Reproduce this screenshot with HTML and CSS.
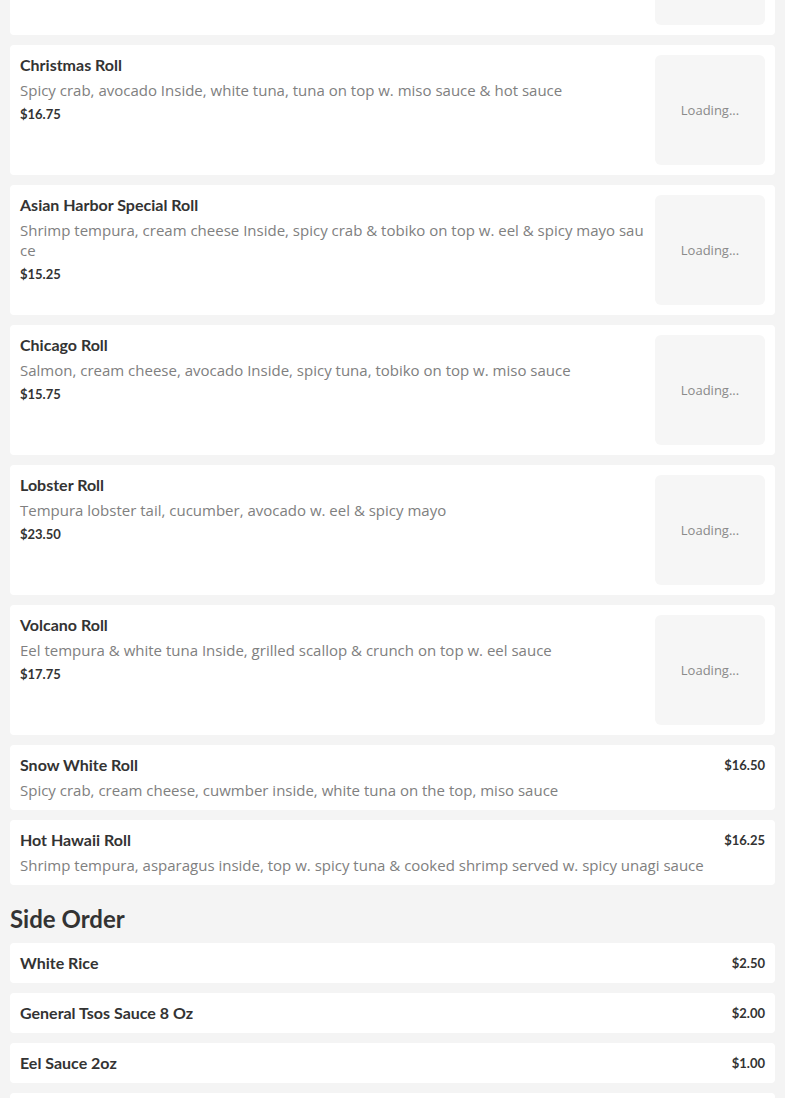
FILE: index.html
```html
<!DOCTYPE html>
<html lang="en">
<head>
<meta charset="utf-8">
<title>Menu</title>
<link rel="stylesheet" href="styles.css">
</head>
<body>
<main class="menu">
  <section class="list">
    <article class="card partial">
      <div class="info"></div>
      <div class="thumb thumb-cut"></div>
    </article>
    <article class="card">
      <div class="info">
        <h3 class="name">Christmas Roll</h3>
        <p class="desc">Spicy crab, avocado Inside, white tuna, tuna on top w. miso sauce &amp; hot sauce</p>
        <p class="price">$16.75</p>
      </div>
      <div class="thumb">Loading...</div>
    </article>
    <article class="card">
      <div class="info">
        <h3 class="name">Asian Harbor Special Roll</h3>
        <p class="desc">Shrimp tempura, cream cheese Inside, spicy crab &amp; tobiko on top w. eel &amp; spicy mayo sauce</p>
        <p class="price">$15.25</p>
      </div>
      <div class="thumb">Loading...</div>
    </article>
    <article class="card">
      <div class="info">
        <h3 class="name">Chicago Roll</h3>
        <p class="desc">Salmon, cream cheese, avocado Inside, spicy tuna, tobiko on top w. miso sauce</p>
        <p class="price">$15.75</p>
      </div>
      <div class="thumb">Loading...</div>
    </article>
    <article class="card">
      <div class="info">
        <h3 class="name">Lobster Roll</h3>
        <p class="desc">Tempura lobster tail, cucumber, avocado w. eel &amp; spicy mayo</p>
        <p class="price">$23.50</p>
      </div>
      <div class="thumb">Loading...</div>
    </article>
    <article class="card">
      <div class="info">
        <h3 class="name">Volcano Roll</h3>
        <p class="desc">Eel tempura &amp; white tuna Inside, grilled scallop &amp; crunch on top w. eel sauce</p>
        <p class="price">$17.75</p>
      </div>
      <div class="thumb">Loading...</div>
    </article>
    <article class="card plain">
      <div class="info">
        <div class="head">
          <h3 class="name">Snow White Roll</h3>
          <p class="price">$16.50</p>
        </div>
        <p class="desc">Spicy crab, cream cheese, cuwmber inside, white tuna on the top, miso sauce</p>
      </div>
    </article>
    <article class="card plain">
      <div class="info">
        <div class="head">
          <h3 class="name">Hot Hawaii Roll</h3>
          <p class="price">$16.25</p>
        </div>
        <p class="desc">Shrimp tempura, asparagus inside, top w. spicy tuna &amp; cooked shrimp served w. spicy unagi sauce</p>
      </div>
    </article>
  </section>

  <h2 class="section-title">Side Order</h2>

  <section class="list">
    <article class="card simple">
      <h3 class="name">White Rice</h3>
      <p class="price">$2.50</p>
    </article>
    <article class="card simple">
      <h3 class="name">General Tsos Sauce 8 Oz</h3>
      <p class="price">$2.00</p>
    </article>
    <article class="card simple">
      <h3 class="name">Eel Sauce 2oz</h3>
      <p class="price">$1.00</p>
    </article>
    <article class="card simple empty"></article>
  </section>
</main>
</body>
</html>
```

FILE: styles.css
```css
* {
  box-sizing: border-box;
}

html, body {
  margin: 0;
  padding: 0;
  background: #f4f4f4;
}

body {
  font-family: "Lato", "Liberation Sans", sans-serif;
  color: #333;
  overflow: hidden;
}

.menu {
  padding: 0 10px;
  display: flex;
  flex-direction: column;
  gap: 10px;
}

.list {
  display: flex;
  flex-direction: column;
  gap: 10px;
}

.card {
  background: #fff;
  border-radius: 4px;
  padding: 10px;
  display: flex;
  gap: 10px;
}

.partial {
  padding-top: 0;
  border-top-left-radius: 0;
  border-top-right-radius: 0;
}

.info {
  flex: 1;
  min-width: 0;
  display: flex;
  flex-direction: column;
}

.name {
  margin: 0;
  font-family: "Lato", "Liberation Sans", sans-serif;
  font-weight: 700;
  font-size: 16px;
  line-height: 20px;
  color: #333;
}

.desc {
  margin: 5px 0 0;
  font-family: "Open Sans", "DejaVu Sans", sans-serif;
  font-size: 15px;
  line-height: 20px;
  color: #808080;
  word-break: break-all;
}

.price {
  margin: 4px 0 0;
  font-family: "Lato", "Liberation Sans", sans-serif;
  font-weight: 700;
  font-size: 13px;
  line-height: 20px;
  color: #333;
}

.thumb {
  flex: 0 0 110px;
  height: 110px;
  border-radius: 6px;
  background: #f6f6f6;
  display: flex;
  align-items: center;
  justify-content: center;
  font-family: "Open Sans", "DejaVu Sans", sans-serif;
  font-size: 13px;
  color: #8a8a8a;
}

.thumb-cut {
  height: 25px;
  border-top-left-radius: 0;
  border-top-right-radius: 0;
}

.head {
  display: flex;
  justify-content: space-between;
  align-items: center;
}

.head .price,
.simple .price {
  margin: 0;
}

.simple {
  justify-content: space-between;
  align-items: center;
}

.empty {
  min-height: 40px;
}

.section-title {
  margin: 0;
  padding-top: 9px;
  font-family: "Lato", "Liberation Sans", sans-serif;
  font-weight: 700;
  font-size: 24px;
  line-height: 29px;
  color: #333;
}
```
